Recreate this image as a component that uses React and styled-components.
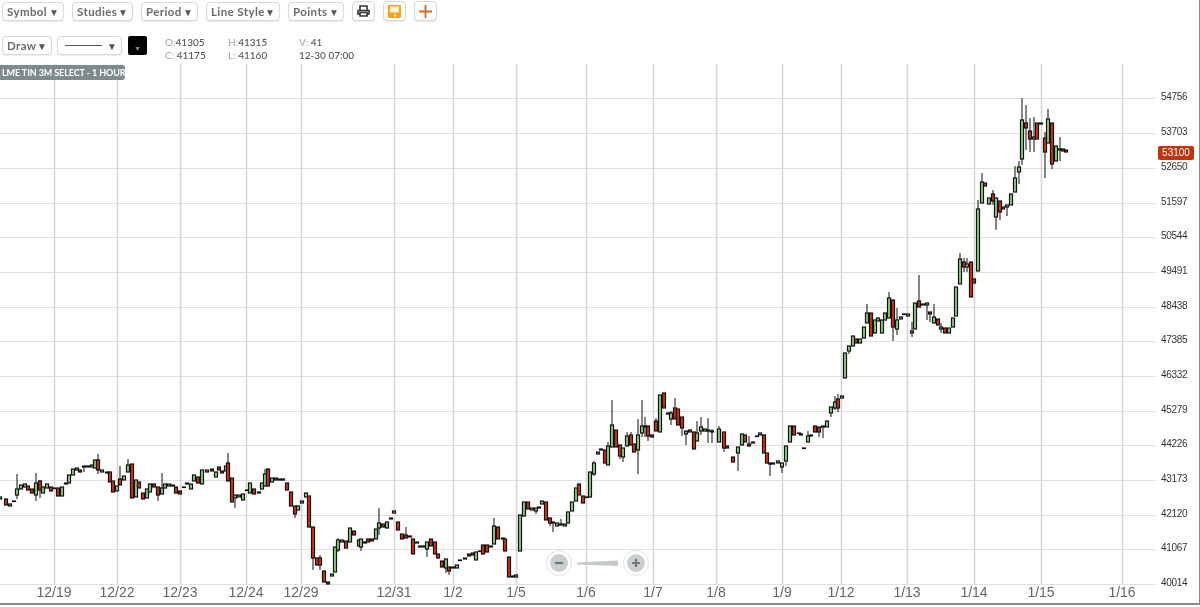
import React from 'react';
import styled, { createGlobalStyle } from 'styled-components';

const GlobalStyle = createGlobalStyle`
    html, body {
        margin: 0;
        padding: 0;
        background: #fff;
    }
`;

// [x, bodyTop, bodyBottom, colour, wickTop, wickBottom]
const CANDLES = [
    [0, 497, 499, 'g'], [6, 499, 505, 'r'], [10, 504, 506, 'g'], [14, 501, 501.5, 'g'],
    [17, 489, 495, 'g', 474, 499], [21, 485, 489, 'g'], [25, 484, 487, 'g'], [28, 486, 490, 'r'],
    [32, 489, 493, 'r'], [36, 483, 495, 'g', 473, 501], [40, 481, 490, 'r', 480, 498], [43, 487, 493, 'g'],
    [47, 484, 488, 'g'], [51, 487, 491, 'r'], [54, 488, 488.5, 'g'], [58, 488, 496, 'r'],
    [62, 487, 496, 'g'], [66, 483, 484, 'g'], [69, 475, 483, 'g'], [73, 469, 475, 'g'],
    [77, 468, 470, 'g'], [80, 470, 472, 'r'], [84, 466, 467, 'g', 466, 472], [88, 466, 467, 'g'],
    [92, 465, 467, 'g'], [95, 460, 468, 'g'], [98, 460, 470, 'r', 454, 474], [102, 470, 472, 'g'],
    [107, 472, 473, 'g'], [110, 472, 482, 'r'], [113, 481, 492, 'r'], [117, 486, 491, 'g'],
    [120, 479, 485, 'r', 466, 485], [124, 476, 480, 'g'], [128, 465, 472, 'g', 459, 472], [132, 464, 498, 'r'],
    [136, 480, 497, 'g'], [139, 482, 488, 'r'], [143, 493, 499, 'r'], [147, 489, 498, 'g'],
    [150, 484, 492, 'g'], [154, 484, 487, 'r'], [158, 487, 495, 'r', 487, 501], [162, 488, 494, 'g', 473, 494],
    [165, 484, 488, 'g'], [169, 484, 486, 'g'], [173, 485, 486, 'g'], [176, 487, 493, 'r'],
    [180, 491, 494, 'r'], [184, 487, 487.5, 'g'], [187, 483, 484, 'r'], [191, 484, 489, 'g'],
    [194, 475, 481, 'g'], [198, 477, 483, 'r'], [202, 470, 484, 'g'], [207, 470, 472, 'g'],
    [212, 469, 471, 'r'], [216, 472, 477, 'g'], [219, 467, 470, 'r'], [222, 471, 473, 'r'],
    [226, 466, 471, 'g'], [228, 463, 481, 'r', 453, 481], [232, 478, 502, 'r'], [235, 495, 498, 'g', 495, 508],
    [239, 495, 497, 'g'], [243, 494, 500, 'g'], [247, 490, 490.5, 'g'], [250, 483, 493, 'g'],
    [254, 489, 494, 'r'], [259, 492, 493, 'g'], [262, 483, 489, 'g'], [265, 474, 486, 'g', 469, 486],
    [268, 469, 486, 'r'], [272, 478, 482, 'g'], [276, 478, 480, 'r'], [280, 479, 480, 'g'],
    [283, 479, 480, 'g'], [287, 483, 490, 'r'], [291, 492, 506, 'r'], [295, 506, 514, 'r', 506, 518],
    [298, 506, 510, 'g'], [302, 501, 503, 'g'], [306, 493, 497, 'g'], [309, 496, 527, 'r'],
    [313, 527, 558, 'r', 527, 570], [317, 558, 565, 'r'], [320, 558, 565, 'r', 555, 570], [324, 571, 582, 'r'],
    [328, 582, 584, 'r'], [332, 574, 576, 'g'], [335, 547, 572, 'g'], [338, 540, 550, 'g', 538, 552],
    [342, 540, 542, 'g'], [346, 541, 548, 'r'], [350, 528, 542, 'g'], [354, 531, 535, 'r'],
    [359, 540, 546, 'g'], [361, 539, 547, 'g', 539, 551], [365, 542, 543, 'g'], [368, 539, 542, 'r'],
    [372, 539, 541, 'r'], [376, 529, 539, 'g'], [379, 523, 528, 'g', 508, 535], [383, 524, 527, 'r'],
    [387, 522, 528, 'g'], [391, 518, 519, 'g'], [394, 511, 513, 'g'], [398, 522, 530, 'r'],
    [402, 534, 539, 'r'], [406, 535, 538, 'r', 527, 538], [410, 536, 537, 'r'], [413, 539, 554, 'r'],
    [417, 542, 543, 'g'], [420, 546, 547, 'g'], [424, 546, 547, 'g'], [427, 542, 549, 'g', 542, 557],
    [431, 539, 546, 'r'], [435, 542, 554, 'r'], [438, 554, 558, 'r'], [442, 561, 567, 'r'],
    [446, 559, 568, 'g', 559, 573], [449, 567, 571, 'r', 567, 575], [453, 567, 568, 'g'], [457, 565, 568, 'g'],
    [460, 560, 560.5, 'g'], [465, 558, 559, 'g'], [469, 554, 556, 'r'], [473, 553, 555, 'r'],
    [476, 552, 560, 'g'], [480, 551, 551.5, 'g'], [483, 545, 554, 'r'], [487, 545, 552, 'r'],
    [491, 546, 547, 'g'], [494, 526, 544, 'g', 518, 544], [498, 527, 539, 'r'], [503, 538, 539, 'g'],
    [505, 539, 551, 'r'], [509, 557, 577, 'r'], [513, 576, 577, 'g'], [516, 575, 577, 'g'],
    [520, 515, 551, 'g'], [524, 502, 516, 'g'], [528, 502, 509, 'r'], [532, 508, 510, 'g'],
    [536, 508, 511, 'g', 508, 514], [539, 507, 508, 'g'], [542, 501, 504, 'g'], [546, 502, 520, 'r'],
    [550, 518, 523, 'r', 518, 526], [553, 522, 523, 'r', 522, 532], [557, 523, 526, 'g'], [561, 524, 525, 'r', 519, 525],
    [565, 524, 526, 'g'], [568, 512, 523, 'g'], [572, 502, 511, 'g'], [576, 488, 501, 'g'],
    [579, 484, 495, 'r'], [583, 496, 503, 'r'], [587, 497, 497.5, 'g'], [590, 472, 497, 'g'],
    [594, 463, 474, 'g', 461, 476], [598, 452, 454, 'g'], [601, 449, 450, 'g'], [605, 450, 463, 'r'],
    [608, 446, 465, 'g', 442, 465], [612, 425, 447, 'g', 400, 447], [616, 430, 447, 'r'], [620, 445, 456, 'r', 445, 459],
    [623, 448, 457, 'g', 448, 462], [627, 436, 446, 'g', 432, 446], [631, 435, 445, 'r', 432, 445], [634, 444, 452, 'r'],
    [638, 435, 450, 'g', 419, 474], [642, 426, 433, 'g', 400, 437], [645, 426, 427, 'g', 417, 437], [648, 426, 436, 'r', 426, 441],
    [652, 435, 437, 'r'], [656, 421, 431, 'r', 418, 431], [660, 395, 432, 'g'], [664, 393, 408, 'r'],
    [668, 413, 414, 'g'], [671, 413, 419, 'g', 411, 425], [675, 408, 419, 'r', 398, 419], [678, 409, 425, 'r'],
    [682, 417, 428, 'r', 417, 436], [686, 431, 434, 'g', 431, 445], [690, 430, 432, 'r'], [694, 432, 449, 'r'],
    [697, 433, 441, 'g', 421, 441], [701, 427, 431, 'g', 417, 435], [705, 429, 431, 'g'], [708, 430, 431, 'g', 418, 443],
    [712, 431, 432, 'g', 429, 443], [719, 429, 442, 'g', 426, 442], [724, 432, 448, 'r', 432, 452], [727, 446, 448, 'r'],
    [733, 457, 462, 'r'], [738, 447, 453, 'g', 447, 471], [742, 434, 445, 'g'], [745, 435, 442, 'r'],
    [749, 444, 446, 'r', 436, 446], [753, 442, 443, 'r'], [757, 436, 436.5, 'g'], [760, 433, 435, 'g'],
    [764, 435, 453, 'r'], [767, 453, 463, 'r'], [770, 463, 464, 'g', 463, 476], [773, 463, 464, 'g'],
    [778, 461, 463, 'g'], [782, 463, 467, 'g', 463, 473], [786, 446, 461, 'g', 446, 466], [790, 426, 442, 'g'],
    [794, 426, 435, 'r'], [799, 433, 433.5, 'g'], [801, 434, 435, 'r'], [804, 448, 448.5, 'g'],
    [808, 436, 442, 'g', 431, 442], [811, 435, 436, 'r'], [815, 426, 432, 'r'], [819, 427, 432, 'r', 427, 437],
    [823, 426, 427, 'r', 426, 438], [827, 421, 427, 'g'], [831, 407, 413, 'g', 407, 417], [835, 402, 408, 'g', 396, 410],
    [838, 399, 408, 'r', 394, 412], [842, 396, 398, 'g'], [845, 353, 378, 'g'], [849, 346, 351, 'g', 346, 354],
    [853, 336, 346, 'g'], [856, 339, 343, 'r'], [860, 339, 343, 'g'], [864, 327, 338, 'g'],
    [867, 313, 323, 'g', 304, 323], [871, 313, 336, 'r'], [875, 320, 333, 'g'], [878, 318, 321, 'g'],
    [882, 320, 333, 'g'], [885, 313, 320, 'g'], [889, 298, 318, 'g', 292, 318], [893, 300, 327, 'r', 300, 341],
    [897, 320, 329, 'g', 308, 335], [901, 317, 319, 'g'], [904, 314, 314.5, 'g'], [908, 314, 316, 'g'],
    [912, 331, 333, 'g', 322, 337], [915, 303, 329, 'g'], [919, 301, 307, 'r', 275, 307], [923, 304, 305, 'g'],
    [927, 303, 305, 'g', 303, 320], [930, 312, 314, 'r', 312, 322], [934, 317, 323, 'g', 304, 323], [938, 319, 325, 'r'],
    [941, 327, 329, 'g', 323, 333], [945, 328, 333, 'r'], [949, 328, 333, 'g'], [953, 318, 327, 'g'],
    [956, 287, 316, 'g'], [960, 259, 284, 'g', 253, 284], [964, 262, 267, 'r', 258, 272], [967, 264, 267, 'g', 258, 272],
    [971, 262, 297, 'r'], [974, 279, 283, 'r'], [978, 209, 271, 'g', 200, 271], [982, 182, 203, 'g', 173, 203],
    [985, 183, 186, 'r'], [989, 198, 204, 'g'], [993, 194, 201, 'r', 190, 205], [996, 198, 217, 'g', 198, 230],
    [1000, 201, 212, 'r', 201, 220], [1003, 207, 209, 'r'], [1007, 205, 207, 'g', 205, 216], [1011, 194, 205, 'g'],
    [1015, 178, 192, 'g', 166, 192], [1019, 167, 172, 'g', 161, 184], [1022, 120, 159, 'g', 98, 165], [1026, 123, 128, 'r', 105, 150],
    [1030, 131, 139, 'r', 118, 152], [1034, 137, 139, 'g', 117, 152], [1037, 123, 139, 'r'], [1041, 123, 124, 'r'],
    [1045, 138, 152, 'r', 132, 178], [1048, 119, 143, 'g', 109, 143], [1052, 123, 164, 'r', 123, 169], [1056, 146, 161, 'g'],
    [1060, 149, 150, 'r', 137, 161], [1063, 149, 151, 'r'], [1066, 150, 152, 'r']
];

const PRICES = [
    ['54756', 98], ['53703', 133], ['52650', 168], ['51597', 203], ['50544', 237],
    ['49491', 272], ['48438', 307], ['47385', 341], ['46332', 376], ['45279', 411],
    ['44226', 445], ['43173', 480], ['42120', 515], ['41067', 549], ['40014', 584]
];

const DATES = [
    ['12/19', 54], ['12/22', 117], ['12/23', 180], ['12/24', 246], ['12/29', 301],
    ['12/31', 394], ['1/2', 453], ['1/5', 516], ['1/6', 586], ['1/7', 653], ['1/8', 716],
    ['1/9', 782], ['1/12', 841], ['1/13', 907], ['1/14', 974], ['1/15', 1041], ['1/16', 1122]
];

const CHART_TOP = 64;

const Page = styled.div`
    position: relative;
    box-sizing: border-box;
    width: 1200px;
    height: 605px;
    overflow: hidden;
    background: #fff;
    border-right: 1px solid #8a8a8a;
    border-bottom: 2px solid #8a8a8a;
    font-family: "Lato", "Noto Sans", sans-serif;
    color: #4d4d4d;
    filter: blur(0.35px);
`;

const Header = styled.header`
    height: 64px;
    padding: 2px 0 0 2px;
    box-sizing: border-box;
`;

const Toolbar = styled.div`
    display: flex;
    align-items: flex-start;
    gap: 8px;
`;

const DrawBar = styled(Toolbar)`
    margin-top: 15px;
    gap: 5px;
`;

const Button = styled.div`
    display: flex;
    align-items: center;
    justify-content: space-between;
    box-sizing: border-box;
    width: ${p => p.$w}px;
    height: 19px;
    padding: 0 4px;
    border: 1px solid #d8d8d8;
    border-radius: 4px;
    background: #fff;
    box-shadow: 0 1px 1px rgba(0, 0, 0, 0.08);
    font-size: 11.5px;
    font-weight: 700;
    letter-spacing: 0.4px;
    color: #6a6a6a;
    white-space: nowrap;
`;

const IconButton = styled(Button)`
    justify-content: center;
    padding: 0;
    width: 23px;
    height: 20px;
    margin-top: -1px;
`;

const Caret = styled.span`
    font-size: 10px;
    color: #555;
    letter-spacing: 0;
`;

const LineSample = styled.span`
    width: 37px;
    height: 1px;
    margin-left: 3px;
    background: #555;
`;

const Swatch = styled.div`
    display: flex;
    align-items: flex-end;
    justify-content: center;
    box-sizing: border-box;
    width: 19px;
    height: 19px;
    margin-left: 1px;
    padding-bottom: 3px;
    border-radius: 2px;
    background: #000;
    font-size: 7px;
    line-height: 1;
    color: #888;
`;

const Quote = styled.div`
    display: grid;
    grid-template-columns: 63px 71px auto;
    margin: 0 0 0 13px;
    font-size: 10px;
    line-height: 13px;
    font-weight: 500;
    color: #555;
`;

const QuoteKey = styled.span`
    color: #aaa;
`;

const ChartArea = styled.div`
    position: relative;
    height: 539px;
`;

const ChartSvg = styled.svg`
    display: block;
`;

const SymbolTag = styled.div`
    position: absolute;
    left: 0;
    top: 1px;
    width: 125px;
    height: 15px;
    padding-left: 2px;
    box-sizing: border-box;
    border-radius: 0 3px 3px 0;
    background: #7d8a8e;
    color: #fff;
    font-size: 9px;
    font-weight: 700;
    letter-spacing: -0.1px;
    line-height: 15px;
    white-space: nowrap;
`;

const PriceTag = styled.div`
    position: absolute;
    left: 1158px;
    top: 82px;
    width: 36px;
    height: 14px;
    border-radius: 2px;
    background: #c1330c;
    color: #fff;
    font-family: "Liberation Sans", sans-serif;
    font-size: 10px;
    line-height: 14px;
    text-align: center;
`;

const ZoomControl = styled.div`
    position: absolute;
    left: 547px;
    top: 487px;
    display: flex;
    align-items: center;
    gap: 6px;
`;

const ZoomButton = styled.div`
    display: flex;
    align-items: center;
    justify-content: center;
    width: 18px;
    height: 18px;
    border: 3px solid #fff;
    border-radius: 50%;
    outline: 1px solid #dfe2e3;
    background: #c9cfd1;
    color: #6f777a;
`;

const PriceLabel = styled.text`
    font-family: "Liberation Sans", sans-serif;
    font-size: 10px;
    letter-spacing: -0.3px;
    fill: #333;
`;

const DateLabel = styled.text`
    font-family: "Liberation Sans", sans-serif;
    font-size: 14px;
    fill: #666;
    text-anchor: middle;
`;

function Candle({ data }) {
    const [x, top, bottom, colour, wickTop = top, wickBottom = bottom] = data;
    const y = top - CHART_TOP;
    return (
        <g>
            {(wickTop < top || wickBottom > bottom) &&
                <line x1={x} x2={x} y1={wickTop - CHART_TOP} y2={wickBottom - CHART_TOP} stroke="#444" strokeWidth="1.3" />}
            <rect x={x - 1.5} y={y} width="3" height={bottom - top} stroke="#111" strokeWidth="1.2"
                fill={colour === 'g' ? '#8ed37c' : '#d8320c'} />
        </g>
    );
}

function Chart() {
    return (
        <ChartSvg width="1199" height="539">
            {PRICES.map(([label, y]) => (
                <g key={label}>
                    <line x1="0" x2="1155" y1={y - CHART_TOP + 0.5} y2={y - CHART_TOP + 0.5} stroke="#e0e0e0" />
                    <PriceLabel x="1161" y={y - CHART_TOP + 2}>{label}</PriceLabel>
                </g>
            ))}
            {DATES.map(([label, x]) => (
                <g key={label}>
                    <line x1={x + 0.5} x2={x + 0.5} y1="0" y2="520" stroke="#d4d4d4" strokeWidth="1.5" />
                    <DateLabel x={x} y="533">{label}</DateLabel>
                </g>
            ))}
            {CANDLES.map(c => <Candle key={c[0]} data={c} />)}
        </ChartSvg>
    );
}

export default function App() {
    return (
        <Page>
            <GlobalStyle />
            <Header>
                <Toolbar>
                    <Button $w={62}>Symbol <Caret>▼</Caret></Button>
                    <Button $w={61}>Studies <Caret>▼</Caret></Button>
                    <Button $w={57}>Period <Caret>▼</Caret></Button>
                    <Button $w={74}>Line Style <Caret>▼</Caret></Button>
                    <Button $w={56}>Points <Caret>▼</Caret></Button>
                    <IconButton>
                        <svg width="13" height="12" viewBox="0 0 13 12">
                            <path d="M3 5V1h7v4M3 9H1V5.5h11V9h-2M3 7.5h7V11H3z" fill="none" stroke="#333" strokeWidth="1.6" />
                        </svg>
                    </IconButton>
                    <IconButton>
                        <svg width="13" height="13" viewBox="0 0 13 13">
                            <rect width="13" height="13" rx="1" fill="#f5a21f" />
                            <rect x="2" y="1.5" width="9" height="6" fill="#fff3d6" />
                            <rect x="6" y="9.5" width="2" height="2" fill="#fff" />
                        </svg>
                    </IconButton>
                    <IconButton>
                        <svg width="13" height="13" viewBox="0 0 13 13">
                            <path d="M6.5 0v13M0 6.5h13" stroke="#d2691e" strokeWidth="1.8" />
                        </svg>
                    </IconButton>
                </Toolbar>
                <DrawBar>
                    <Button $w={50}>Draw <Caret>▼</Caret></Button>
                    <Button $w={65}><LineSample /><Caret>▼</Caret></Button>
                    <Swatch>▼</Swatch>
                    <Quote>
                        <span><QuoteKey>O:</QuoteKey>41305</span>
                        <span><QuoteKey>H:</QuoteKey>41315</span>
                        <span><QuoteKey>V:</QuoteKey> 41</span>
                        <span><QuoteKey>C:</QuoteKey> 41175</span>
                        <span><QuoteKey>L:</QuoteKey> 41160</span>
                        <span>12-30 07:00</span>
                    </Quote>
                </DrawBar>
            </Header>
            <ChartArea>
                <Chart />
                <SymbolTag>LME TIN 3M SELECT - 1 HOUR</SymbolTag>
                <PriceTag>53100</PriceTag>
                <ZoomControl>
                    <ZoomButton>
                        <svg width="10" height="10" viewBox="0 0 10 10"><path d="M1 5h8" stroke="#6f777a" strokeWidth="2.2" /></svg>
                    </ZoomButton>
                    <svg width="41" height="7" viewBox="0 0 41 7"><path d="M0 2.5L40 0.5a1 1 0 0 1 1 1V5a1 1 0 0 1-1 1L0 4.5z" fill="#c4c9cb" /></svg>
                    <ZoomButton>
                        <svg width="10" height="10" viewBox="0 0 10 10"><path d="M1 5h8M5 1v8" stroke="#6f777a" strokeWidth="2.2" /></svg>
                    </ZoomButton>
                </ZoomControl>
            </ChartArea>
        </Page>
    );
}
